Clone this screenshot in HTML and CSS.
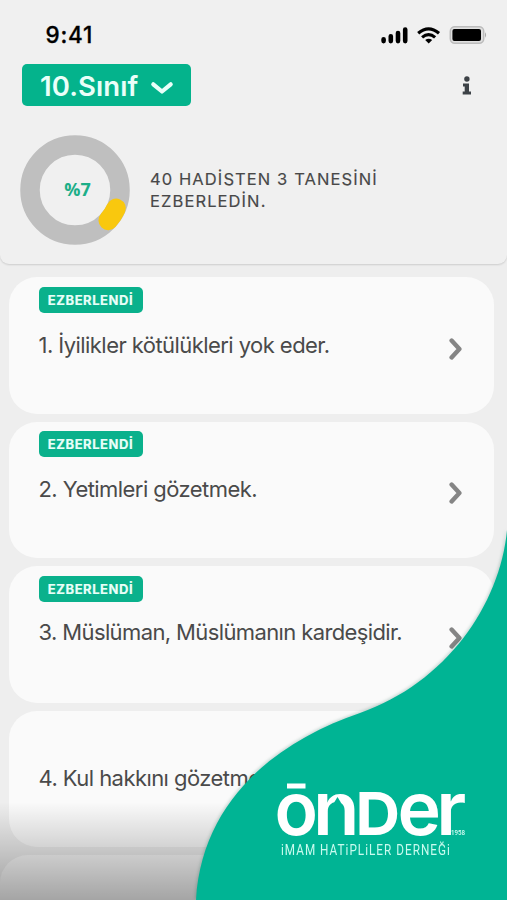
FILE: index.html
```html
<!DOCTYPE html>
<html lang="tr">
<head>
<meta charset="utf-8">
<title>10.Sınıf</title>
<link rel="stylesheet" href="styles.css">
</head>
<body>
<main class="screen">
  <header class="hero">
    <div class="status">
      <span class="time">9:41</span>
      <svg class="status-icons" width="110" height="20" viewBox="0 0 110 20">
        <g stroke="#000" stroke-width="4.6" stroke-linecap="round">
          <path d="M4.6 13.3v1.8M11.8 10.3v4.8M19 7v8.1M26.2 3.5v11.6"/>
        </g>
        <g fill="none" stroke="#000" stroke-width="3.2">
          <path d="M39.2 7.2q10.3-8.7 20.8 0"/>
          <path d="M43.1 11.4q6.5-5.5 13 0"/>
        </g>
        <path d="M46.2 14q3.5-2.5 7 0l-3.5 3.5z"/>
        <rect x="71.3" y="0.7" width="33.4" height="16.6" rx="4.5" fill="#e0e0e0" stroke="#bcbcbc" stroke-width="1.5"/>
        <rect x="73.4" y="2.9" width="28.6" height="12.2" rx="2" />
        <path d="M106 6.3q2.2 2.7 0 5.4z" fill="#aaa"/>
      </svg>
    </div>
    <div class="toolbar">
      <button class="grade">10.Sınıf
        <svg width="24" height="16" viewBox="0 0 24 16"><path d="M3.3 5.3 12 12.5l8.7-7.2" fill="none" stroke="#eafff9" stroke-width="4.2" stroke-linecap="round" stroke-linejoin="round"/></svg>
      </button>
      <svg class="info" width="10" height="19" viewBox="0 0 10 19" fill="#3d4247"><circle cx="4.9" cy="3" r="2.7"/><path d="M1 7.5h6v8h2v3H.7v-3h2v-5H1z"/></svg>
    </div>
    <div class="progress">
      <svg class="ring" width="110" height="110" viewBox="0 0 110 110">
        <circle cx="55" cy="55" r="45" fill="none" stroke="#bfbfbf" stroke-width="19.5"/>
        <path d="M96.1 73.3A45 45 0 0 1 88.2 85.4" fill="none" stroke="#f9c80e" stroke-width="19.5" stroke-linecap="round"/>
        <text class="percent" x="57.5" y="61" text-anchor="middle">%7</text>
      </svg>
      <p class="summary">40 HADİSTEN 3 TANESİNİ<br>EZBERLEDİN.</p>
    </div>
  </header>
  <section class="list">
    <article class="card">
      <span class="badge">EZBERLENDİ</span>
      <div class="row"><h2>1. İyilikler kötülükleri yok eder.</h2><svg class="chev" viewBox="0 0 14 22"><path d="m2.6 2.5 7.8 8.5-7.8 8.5"/></svg></div>
    </article>
    <article class="card">
      <span class="badge">EZBERLENDİ</span>
      <div class="row"><h2>2. Yetimleri gözetmek.</h2><svg class="chev" viewBox="0 0 14 22"><path d="m2.6 2.5 7.8 8.5-7.8 8.5"/></svg></div>
    </article>
    <article class="card">
      <span class="badge">EZBERLENDİ</span>
      <div class="row"><h2 class="raised">3. Müslüman, Müslümanın kardeşidir.</h2><svg class="chev" viewBox="0 0 14 22"><path d="m2.6 2.5 7.8 8.5-7.8 8.5"/></svg></div>
    </article>
    <article class="card plain">
      <div class="row"><h2>4. Kul hakkını gözetmek.</h2></div>
    </article>
    <article class="card last"></article>
  </section>
  <div class="fade"></div>
  <svg class="brand" width="507" height="380" viewBox="0 520 507 380">
    <path class="wave" d="M507 530C500 605 446 683 360 713C280 740 202 798 196 900H507Z"/>
    <rect x="287" y="783.5" width="18.5" height="5" fill="#fff"/>
    <g class="logo">
      <text x="274.4" y="835" textLength="43.5" lengthAdjust="spacingAndGlyphs">o</text>
      <text x="313" y="835" textLength="46.5" lengthAdjust="spacingAndGlyphs">n</text>
      <text class="cap" x="355.5" y="835" textLength="44.5" lengthAdjust="spacingAndGlyphs">D</text>
      <text x="397.6" y="835" textLength="43.5" lengthAdjust="spacingAndGlyphs">e</text>
      <text x="436.2" y="835" textLength="30" lengthAdjust="spacingAndGlyphs">r</text>
    </g>
    <path d="M332.500 807q2-6 5-10q3 4 5 10z" fill="#00b494"/>
    <text class="year" x="451" y="835" textLength="14" lengthAdjust="spacingAndGlyphs">1958</text>
    <text class="tagline" transform="translate(281 855) scale(.84 1)" textLength="201" lengthAdjust="spacing">iMAM HATiPLiLER DERNEĞi</text>
  </svg>
</main>
</body>
</html>
```
FILE: styles.css
```css
* { box-sizing: border-box; }
body { margin: 0; background: #efefef; font-family: Inter, "Liberation Sans", sans-serif; }
.screen { position: relative; width: 507px; height: 900px; overflow: hidden; background: #eee; }
.hero { height: 264px; background: #f0f0f0; border-radius: 0 0 9px 9px; box-shadow: 0 1px 2px rgba(0,0,0,.14); }
.status { height: 64px; padding: 26px 18px 0 45.5px; display: flex; justify-content: space-between; align-items: flex-start; }
.time { font-size: 22.5px; line-height: 18px; font-weight: 500; color: #000; letter-spacing: .8px; -webkit-text-stroke: .3px #000; }
.toolbar { height: 42px; padding: 0 35px 0 22px; display: flex; justify-content: space-between; align-items: center; }
.grade { width: 169px; height: 42px; padding: 2px 17px 0 18px; border: 0; border-radius: 5px; background: #04b38c; color: #eafff9; font: 600 27.5px/40px Inter, sans-serif; letter-spacing: .1px; display: flex; align-items: center; justify-content: space-between; white-space: nowrap; }
.grade svg { margin-top: 2px; }
.progress { display: flex; align-items: center; gap: 20px; padding: 29px 0 0 20px; }
.ring { flex: none; }
.percent { font: 700 18px "Open Sans", sans-serif; fill: #1cae88; }
.summary { margin: 0; font-size: 16.5px; line-height: 22.5px; letter-spacing: 1.1px; color: #484848; white-space: nowrap; -webkit-text-stroke: .15px #484848; }
.list { padding: 13px 13px 0 9px; display: flex; flex-direction: column; gap: 8px; }
.card { height: 136.5px; flex: none; border-radius: 28px; background: #fafafa; padding: 9.5px 31px 0 29.5px; }
.badge { display: block; width: 104px; height: 26px; border-radius: 5px; background: #0ab18c; color: #e9fff9; font-size: 13px; font-weight: 700; line-height: 26px; text-align: center; letter-spacing: .55px; -webkit-text-stroke: .2px #e9fff9; }
.row { height: 48px; margin-top: 12px; display: flex; align-items: center; justify-content: space-between; }
.row h2 { margin: 0 0 8px; font-size: 22px; font-weight: 400; line-height: 30px; color: #4a4a4a; letter-spacing: -.56px; white-space: nowrap; }
.row .raised { margin-bottom: 11px; letter-spacing: -.62px; }
.plain { padding-top: 35.5px; }
.last { margin: 0 -9px; }
.chev { width: 14px; height: 22px; fill: none; stroke: #858585; stroke-width: 4.4; stroke-linecap: round; stroke-linejoin: round; }
.fade { position: absolute; left: 0; right: 0; bottom: 0; height: 98px; background: linear-gradient(rgba(0,0,0,0), rgba(0,0,0,.19) 55%, rgba(0,0,0,.34)); }
.brand { position: absolute; left: 0; bottom: 0; filter: drop-shadow(-1px -1px 1.5px rgba(0,80,60,.2)); }
.wave { fill: #00b494; }
.logo { font: 600 74.5px Inter, sans-serif; fill: #fff; }
.cap { font-size: 58.5px; font-weight: 700; }
.year { font: 500 8px Roboto, sans-serif; fill: #d9fff6; }
.tagline { font: 400 14px Roboto, sans-serif; fill: #c9fbef; }
```
